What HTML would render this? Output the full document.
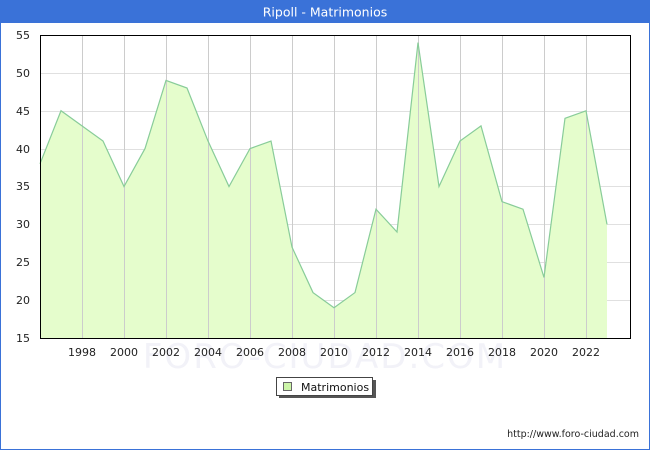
<!DOCTYPE html>
<html><head><meta charset="utf-8"><style>
html,body{margin:0;padding:0;background:#fff}
body{width:650px;height:450px;overflow:hidden;font-family:"DejaVu Sans","Liberation Sans",sans-serif}
</style></head><body>
<svg width="650" height="450" xmlns="http://www.w3.org/2000/svg" font-family="DejaVu Sans, Liberation Sans, sans-serif">
<rect x="0.5" y="0.5" width="649" height="449" fill="#fff" stroke="#3a72d8"/>
<rect x="0" y="0" width="650" height="23" fill="#3a72d8"/>
<text x="325" y="16.5" font-size="12.5" fill="#fff" text-anchor="middle">Ripoll - Matrimonios</text>
<text x="325" y="368" font-size="34" fill="#f2f2f8" text-anchor="middle" letter-spacing="2">FORO-CIUDAD.COM</text>
<g stroke="#e0e0e0" stroke-width="1">
<line x1="40" y1="73.5" x2="630" y2="73.5"/><line x1="40" y1="111.5" x2="630" y2="111.5"/>
<line x1="40" y1="149.5" x2="630" y2="149.5"/><line x1="40" y1="186.5" x2="630" y2="186.5"/>
<line x1="40" y1="224.5" x2="630" y2="224.5"/><line x1="40" y1="262.5" x2="630" y2="262.5"/>
<line x1="40" y1="300.5" x2="630" y2="300.5"/>
</g>
<polygon fill="#e5fdcc" stroke="none" points="40,338 40,163.8 61,110.75 82,125.9 103,141.05 124,186.5 145,148.6 166,80.45 187,88 208,141.05 229,186.5 250,148.6 271,141.05 292,247.1 313,292.55 334,307.7 355,292.55 376,209.2 397,232 418,42.6 439,186.5 460,141.05 481,125.9 502,201.65 523,209.2 544,277.4 565,118.3 586,110.75 607,224.4 607,338"/>
<g stroke="#cccccc" stroke-width="1">
<line x1="82.5" y1="35" x2="82.5" y2="338"/><line x1="124.5" y1="35" x2="124.5" y2="338"/>
<line x1="166.5" y1="35" x2="166.5" y2="338"/><line x1="208.5" y1="35" x2="208.5" y2="338"/>
<line x1="250.5" y1="35" x2="250.5" y2="338"/><line x1="292.5" y1="35" x2="292.5" y2="338"/>
<line x1="334.5" y1="35" x2="334.5" y2="338"/><line x1="376.5" y1="35" x2="376.5" y2="338"/>
<line x1="418.5" y1="35" x2="418.5" y2="338"/><line x1="460.5" y1="35" x2="460.5" y2="338"/>
<line x1="502.5" y1="35" x2="502.5" y2="338"/><line x1="544.5" y1="35" x2="544.5" y2="338"/>
<line x1="586.5" y1="35" x2="586.5" y2="338"/>
</g>
<polyline fill="none" stroke="#88cc99" stroke-width="1.2" points="40,163.8 61,110.75 82,125.9 103,141.05 124,186.5 145,148.6 166,80.45 187,88 208,141.05 229,186.5 250,148.6 271,141.05 292,247.1 313,292.55 334,307.7 355,292.55 376,209.2 397,232 418,42.6 439,186.5 460,141.05 481,125.9 502,201.65 523,209.2 544,277.4 565,118.3 586,110.75 607,224.4"/>
<rect x="40.5" y="35.5" width="590" height="303" fill="none" stroke="#000"/>
<g font-size="11" fill="#222" text-anchor="end">
<text x="30" y="39">55</text><text x="30" y="77">50</text><text x="30" y="115">45</text>
<text x="30" y="153">40</text><text x="30" y="190">35</text><text x="30" y="228">30</text>
<text x="30" y="266">25</text><text x="30" y="304">20</text><text x="30" y="342">15</text>
</g>
<g font-size="11" fill="#222" text-anchor="middle">
<text x="82" y="356">1998</text><text x="124" y="356">2000</text><text x="166" y="356">2002</text>
<text x="208" y="356">2004</text><text x="250" y="356">2006</text><text x="292" y="356">2008</text>
<text x="334" y="356">2010</text><text x="376" y="356">2012</text><text x="418" y="356">2014</text>
<text x="460" y="356">2016</text><text x="502" y="356">2018</text><text x="544" y="356">2020</text>
<text x="586" y="356">2022</text>
</g>
<rect x="279" y="380" width="97" height="18" fill="#555"/>
<rect x="276.5" y="377.5" width="96" height="18" fill="#fff" stroke="#444"/>
<rect x="283.5" y="382.5" width="8" height="8" fill="#ccf5a8" stroke="#666"/>
<text x="301" y="391" font-size="11" fill="#111">Matrimonios</text>
<text x="639" y="437" font-size="9.5" fill="#222" text-anchor="end">http://www.foro-ciudad.com</text>
</svg>
</body></html>
